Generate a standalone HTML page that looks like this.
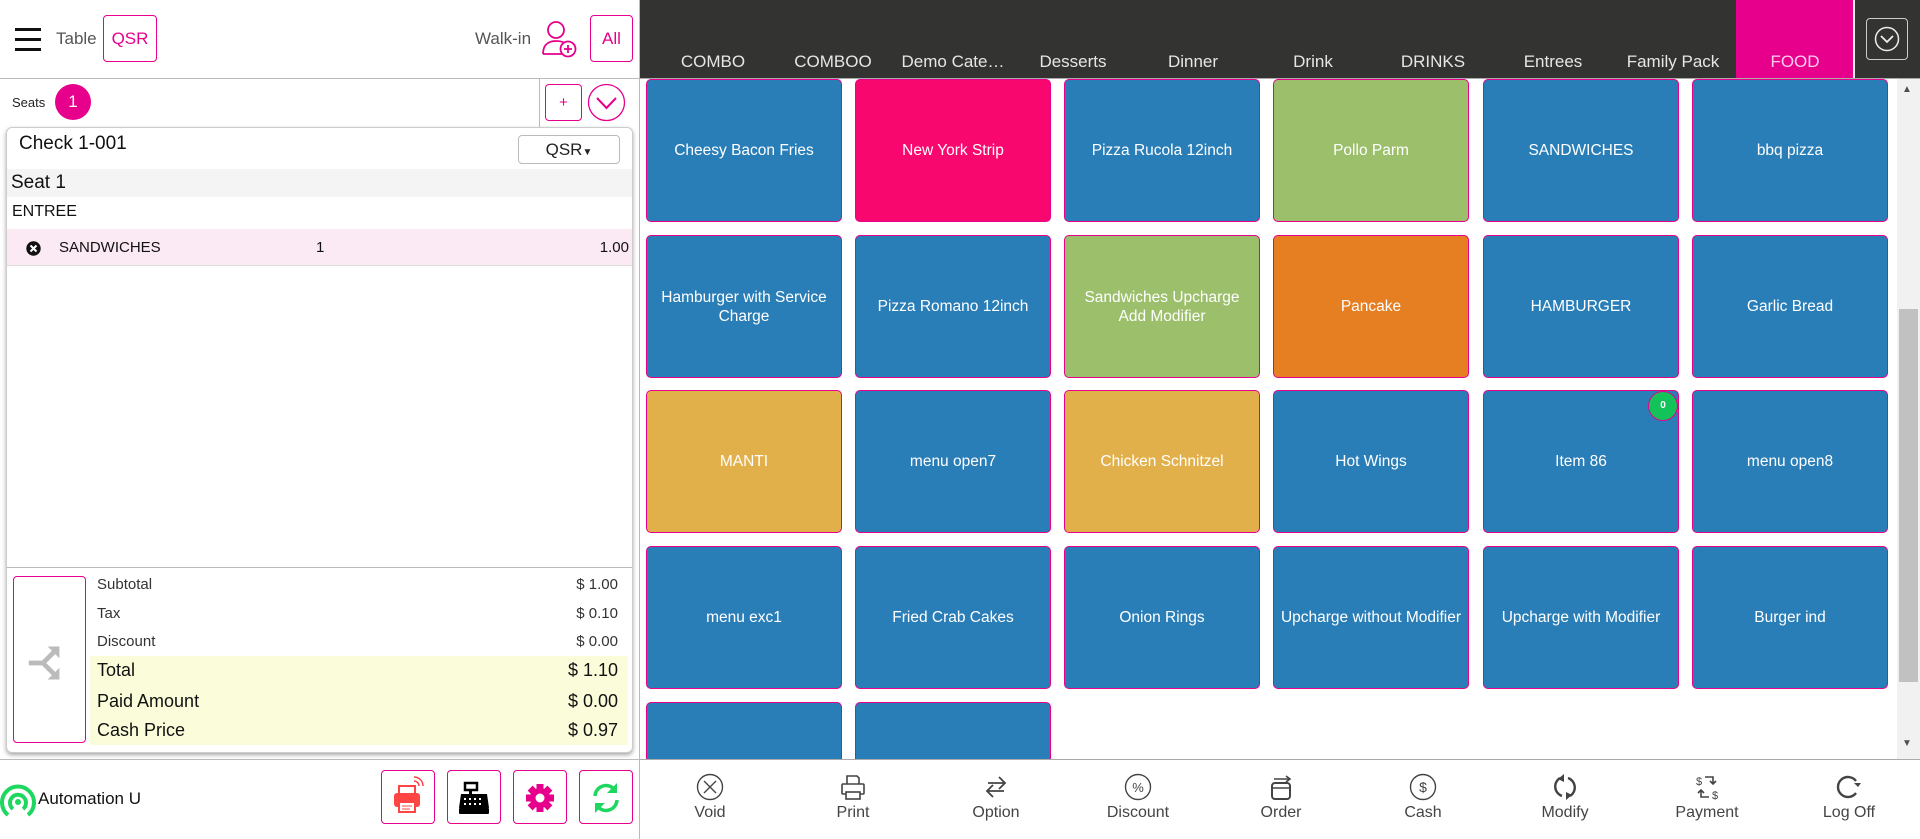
<!DOCTYPE html>
<html><head><meta charset="utf-8"><style>
*{box-sizing:border-box;margin:0;padding:0}
body{width:1920px;height:839px;overflow:hidden;background:#fff;font-family:"Liberation Sans",Arial,sans-serif;position:relative;color:#222}
.a{position:absolute}
.pbox{position:absolute;border:1px solid #e6008c;border-radius:4px;background:#fff}
.cat{position:absolute;top:52px;width:120px;text-align:center;color:#e6e6e6;font-size:17px;white-space:nowrap}
.t{position:absolute;width:196px;height:143px;border:1px solid #e6008c;border-radius:5px;color:#fff;font-size:15.5px;display:flex;align-items:center;justify-content:center;text-align:center;line-height:19px}
.b{background:#2a7eb7}.pk{background:#f8076e}.g{background:#9cbf6b}.o{background:#e67e22}.y{background:#e2b04b}
.bt{position:absolute;top:773px;width:142px;text-align:center;color:#444;font-size:16px}
.bt svg{display:block;margin:0 auto 3px}
.r{position:absolute;left:97px;width:521px;font-size:15px;color:#333}
.r span{float:right}
.R{font-size:18px;color:#111}
</style></head><body>
<!-- left header -->
<div class="a" style="left:15px;top:28px;width:26px;height:3px;background:#111"></div>
<div class="a" style="left:15px;top:38px;width:26px;height:3px;background:#111"></div>
<div class="a" style="left:15px;top:48px;width:26px;height:3px;background:#111"></div>
<div class="a" style="left:56px;top:29px;font-size:17px;color:#555">Table</div>
<div class="pbox" style="left:103px;top:15px;width:54px;height:47px;color:#e6008c;font-size:17px;text-align:center;line-height:45px">QSR</div>
<div class="a" style="left:475px;top:29px;font-size:17px;color:#555">Walk-in</div>
<svg class="a" style="left:542px;top:20px" width="38" height="40" viewBox="0 0 38 40"><circle cx="14" cy="10" r="8" fill="none" stroke="#e6008c" stroke-width="1.8"/><path d="M1 34 C1 22 10 21 14 21 C19 21 22 22 24 24 M1 34 L20 34" fill="none" stroke="#e6008c" stroke-width="1.8"/><circle cx="26" cy="29" r="7.5" fill="#fff" stroke="#e6008c" stroke-width="1.8"/><path d="M26 25v8M22 29h8" stroke="#e6008c" stroke-width="1.8"/></svg>
<div class="pbox" style="left:590px;top:15px;width:43px;height:47px;color:#e6008c;font-size:17px;text-align:center;line-height:45px">All</div>
<div class="a" style="left:0;top:78px;width:640px;height:1px;background:#bbb"></div>
<div class="a" style="left:639px;top:0;width:1px;height:839px;background:#bbb"></div>
<!-- seats -->
<div class="a" style="left:12px;top:95px;font-size:13px">Seats</div>
<div class="a" style="left:55px;top:84px;width:36px;height:36px;border-radius:50%;background:#e6008c;color:#fff;font-size:17px;text-align:center;line-height:36px">1</div>
<div class="a" style="left:539px;top:79px;width:1px;height:48px;background:#bbb"></div>
<div class="pbox" style="left:545px;top:84px;width:37px;height:37px;color:#e6008c;text-align:center;line-height:35px;font-size:15px">+</div>
<svg class="a" style="left:587px;top:83px" width="39" height="39"><circle cx="19.5" cy="19.5" r="18" fill="none" stroke="#e6008c" stroke-width="1.3"/><path d="M10 15l9.5 10 9.5-10" fill="none" stroke="#e6008c" stroke-width="2"/></svg>
<!-- check card -->
<div class="a" style="left:6px;top:127px;width:627px;height:626px;border:1px solid #ccc;border-radius:6px;box-shadow:0 2px 4px rgba(0,0,0,.35);background:#fff"></div>
<div class="a" style="left:19px;top:133px;font-size:19px;color:#111">Check 1-001</div>
<div class="a" style="left:518px;top:135px;width:102px;height:29px;border:1px solid #bbb;border-radius:4px;font-size:17px;text-align:center;line-height:27px">QSR<span style="font-size:10px">▼</span></div>
<div class="a" style="left:7px;top:169px;width:625px;height:28px;background:#f4f4f4;font-size:19px;padding-left:4px;line-height:28px;color:#111">Seat 1</div>
<div class="a" style="left:12px;top:203px;font-size:16px;color:#111">ENTREE</div>
<div class="a" style="left:7px;top:229px;width:625px;height:37px;background:#fbe9f3;border-bottom:1px solid #ddd"></div>
<svg class="a" style="left:26px;top:241px" width="15" height="15"><circle cx="7.5" cy="7.5" r="7.2" fill="#111"/><path d="M4.5 4.5l6 6M10.5 4.5l-6 6" stroke="#fff" stroke-width="2"/></svg>
<div class="a" style="left:59px;top:239px;font-size:15px;color:#111">SANDWICHES</div>
<div class="a" style="left:316px;top:239px;font-size:15px;color:#111">1</div>
<div class="a" style="left:569px;top:239px;width:60px;text-align:right;font-size:15px;color:#111">1.00</div>
<div class="a" style="left:7px;top:567px;width:625px;height:1px;background:#bbb"></div>
<div class="pbox" style="left:13px;top:576px;width:73px;height:167px"></div>
<svg class="a" style="left:28px;top:643px" width="44" height="40" viewBox="0 0 36 34"><path d="M0 17h12l10-10M12 17l10 10" fill="none" stroke="#bbb" stroke-width="4"/><path d="M16 3h10v10z M16 31h10v-10z" fill="#bbb"/></svg>
<div class="a" style="left:90px;top:656px;width:538px;height:89px;background:#fbfdda"></div>
<div class="r" style="top:576px">Subtotal<span>$ 1.00</span></div>
<div class="r" style="top:605px">Tax<span>$ 0.10</span></div>
<div class="r" style="top:633px">Discount<span>$ 0.00</span></div>
<div class="r R" style="top:660px">Total<span>$ 1.10</span></div>
<div class="r R" style="top:691px">Paid Amount<span>$ 0.00</span></div>
<div class="r R" style="top:720px">Cash Price<span>$ 0.97</span></div>
<!-- bottom left -->
<div class="a" style="left:0;top:759px;width:640px;height:1px;background:#bbb"></div>
<svg class="a" style="left:0;top:782px" width="38" height="38" viewBox="0 0 38 38"><path d="M8 33A16 16 0 1 1 28 33" fill="none" stroke="#1ed760" stroke-width="4"/><path d="M13 27A8 8 0 1 1 23 27" fill="none" stroke="#1ed760" stroke-width="4"/><circle cx="18" cy="20" r="3" fill="#1ed760"/></svg>
<div class="a" style="left:38px;top:789px;font-size:17px;color:#111">Automation U</div>
<div class="pbox" style="left:381px;top:770px;width:54px;height:54px"><svg width="52" height="52"><rect x="12" y="22" width="26" height="14" rx="3" fill="#f44"/><rect x="17" y="15" width="16" height="8" fill="#fff" stroke="#f44" stroke-width="2"/><rect x="17" y="31" width="16" height="10" fill="#fff" stroke="#f44" stroke-width="2"/><path d="M20 35h10M20 38h8" stroke="#f44"/><path d="M32 10a5 5 0 0 1 5 5M32 6a9 9 0 0 1 9 9" fill="none" stroke="#f44" stroke-width="1.5"/></svg></div>
<div class="pbox" style="left:447px;top:770px;width:54px;height:54px"><svg width="52" height="52"><rect x="17" y="12" width="12" height="7" fill="none" stroke="#000" stroke-width="2.5"/><rect x="21" y="18" width="3" height="5" fill="#000"/><path d="M13 23h26l2 14H11z" fill="#000"/><rect x="11" y="37" width="30" height="6" rx="1" fill="#000"/><g fill="#fff"><rect x="16" y="27" width="2" height="2"/><rect x="21" y="27" width="2" height="2"/><rect x="26" y="27" width="2" height="2"/><rect x="31" y="27" width="2" height="2"/><rect x="16" y="32" width="2" height="2"/><rect x="21" y="32" width="2" height="2"/><rect x="26" y="32" width="2" height="2"/><rect x="31" y="32" width="2" height="2"/></g></svg></div>
<div class="pbox" style="left:513px;top:770px;width:54px;height:54px"><svg width="52" height="52" viewBox="0 0 52 52"><g transform="translate(26 27)" fill="#e6008c"><circle r="10"/><g id="tt"><rect x="-3.5" y="-14" width="7" height="6"/></g><use href="#tt" transform="rotate(45)"/><use href="#tt" transform="rotate(90)"/><use href="#tt" transform="rotate(135)"/><use href="#tt" transform="rotate(180)"/><use href="#tt" transform="rotate(225)"/><use href="#tt" transform="rotate(270)"/><use href="#tt" transform="rotate(315)"/><circle r="4.5" fill="#fff"/></g></svg></div>
<div class="pbox" style="left:579px;top:770px;width:54px;height:54px"><svg width="52" height="52"><path d="M15 25a11 11 0 0 1 19-7" fill="none" stroke="#1ed760" stroke-width="3.5"/><path d="M37 12v10h-10z" fill="#1ed760"/><path d="M37 29a11 11 0 0 1-19 7" fill="none" stroke="#1ed760" stroke-width="3.5"/><path d="M15 42v-10h10z" fill="#1ed760"/></svg></div>
<!-- right: category bar -->
<div class="a" style="left:640px;top:0;width:1280px;height:78px;background:#333331"></div>
<div class="a" style="left:1736px;top:0;width:117px;height:78px;background:#e6008c"></div>
<div class="a" style="left:1853px;top:0;width:2px;height:78px;background:#eee"></div>
<div class="cat" style="left:653px">COMBO</div>
<div class="cat" style="left:773px">COMBOO</div>
<div class="cat" style="left:893px">Demo Cate…</div>
<div class="cat" style="left:1013px">Desserts</div>
<div class="cat" style="left:1133px">Dinner</div>
<div class="cat" style="left:1253px">Drink</div>
<div class="cat" style="left:1373px">DRINKS</div>
<div class="cat" style="left:1493px">Entrees</div>
<div class="cat" style="left:1613px">Family Pack</div>
<div class="cat" style="left:1735px;color:#fce">FOOD</div>
<div class="a" style="left:1866px;top:18px;width:42px;height:42px;border:1px solid #ccc;border-radius:4px"><svg width="40" height="40"><circle cx="20" cy="20" r="11.5" fill="none" stroke="#eee" stroke-width="1.5"/><path d="M14 17l6 6 6-6" fill="none" stroke="#eee" stroke-width="1.8"/></svg></div>
<div class="a" style="left:640px;top:78px;width:1280px;height:1px;background:#aaa"></div>
<!-- tiles -->
<div class="t b" style="left:646px;top:79px">Cheesy Bacon Fries</div>
<div class="t pk" style="left:855px;top:79px">New York Strip</div>
<div class="t b" style="left:1064px;top:79px">Pizza Rucola 12inch</div>
<div class="t g" style="left:1273px;top:79px">Pollo Parm</div>
<div class="t b" style="left:1483px;top:79px">SANDWICHES</div>
<div class="t b" style="left:1692px;top:79px">bbq pizza</div>
<div class="t b" style="left:646px;top:235px">Hamburger with Service<br>Charge</div>
<div class="t b" style="left:855px;top:235px">Pizza Romano 12inch</div>
<div class="t g" style="left:1064px;top:235px">Sandwiches Upcharge<br>Add Modifier</div>
<div class="t o" style="left:1273px;top:235px">Pancake</div>
<div class="t b" style="left:1483px;top:235px">HAMBURGER</div>
<div class="t b" style="left:1692px;top:235px">Garlic Bread</div>
<div class="t y" style="left:646px;top:390px">MANTI</div>
<div class="t b" style="left:855px;top:390px">menu open7</div>
<div class="t y" style="left:1064px;top:390px">Chicken Schnitzel</div>
<div class="t b" style="left:1273px;top:390px">Hot Wings</div>
<div class="t b" style="left:1483px;top:390px">Item 86</div>
<div class="a" style="left:1648px;top:391px;width:30px;height:30px;border-radius:50%;background:#13c35a;border:1px solid #e6008c;color:#fff;font-size:10px;font-weight:bold;text-align:center;line-height:28px">0</div>
<div class="t b" style="left:1692px;top:390px">menu open8</div>
<div class="t b" style="left:646px;top:546px">menu exc1</div>
<div class="t b" style="left:855px;top:546px">Fried Crab Cakes</div>
<div class="t b" style="left:1064px;top:546px">Onion Rings</div>
<div class="t b" style="left:1273px;top:546px">Upcharge without Modifier</div>
<div class="t b" style="left:1483px;top:546px">Upcharge with Modifier</div>
<div class="t b" style="left:1692px;top:546px">Burger ind</div>
<div class="t b" style="left:646px;top:702px;height:57px;border-bottom:none;border-radius:5px 5px 0 0"></div>
<div class="t b" style="left:855px;top:702px;height:57px;border-bottom:none;border-radius:5px 5px 0 0"></div>
<!-- scrollbar -->
<div class="a" style="left:1897px;top:79px;width:23px;height:680px;background:#f1f1f1"></div>
<div class="a" style="left:1899px;top:309px;width:19px;height:373px;background:#c1c1c1"></div>
<div class="a" style="left:1902px;top:84px;font-size:10px;color:#505050">▲</div>
<div class="a" style="left:1902px;top:738px;font-size:10px;color:#505050">▼</div>
<div class="a" style="left:640px;top:759px;width:1280px;height:1px;background:#aaa"></div>
<!-- bottom toolbar -->
<div class="bt" style="left:639px"><svg width="28" height="28"><circle cx="14" cy="14" r="12.5" fill="none" stroke="#444" stroke-width="1.4"/><path d="M8 8l12 12M20 8L8 20" stroke="#444" stroke-width="1.4"/></svg>Void</div>
<div class="bt" style="left:782px"><svg width="28" height="28"><path d="M8 11V3h10l2 2v6" fill="none" stroke="#444" stroke-width="1.6"/><rect x="3" y="11" width="22" height="10" rx="1" fill="none" stroke="#444" stroke-width="1.6"/><rect x="7" y="19" width="14" height="7" fill="#fff" stroke="#444" stroke-width="1.6"/></svg>Print</div>
<div class="bt" style="left:925px"><svg width="28" height="28"><path d="M6 10h16M17 4l6 6-6 6M22 18H6M11 12l-6 6 6 6" fill="none" stroke="#444" stroke-width="1.8"/></svg>Option</div>
<div class="bt" style="left:1067px"><svg width="28" height="28"><circle cx="14" cy="14" r="12.5" fill="none" stroke="#444" stroke-width="1.4"/><text x="14" y="19" font-size="13" text-anchor="middle" fill="#444" font-family="Liberation Sans">%</text></svg>Discount</div>
<div class="bt" style="left:1210px"><svg width="28" height="28"><rect x="5" y="10" width="18" height="16" rx="3" fill="none" stroke="#444" stroke-width="2"/><path d="M5 15h18M7 6h16M19 3l4 3-4 3" fill="none" stroke="#444" stroke-width="1.6"/></svg>Order</div>
<div class="bt" style="left:1352px"><svg width="28" height="28"><circle cx="14" cy="14" r="12.5" fill="none" stroke="#444" stroke-width="1.4"/><text x="14" y="19" font-size="14" text-anchor="middle" fill="#444" font-family="Liberation Sans">$</text></svg>Cash</div>
<div class="bt" style="left:1494px"><svg width="28" height="28"><path d="M9 5A10 10 0 0 0 11 23M19 23A10 10 0 0 0 17 5" fill="none" stroke="#444" stroke-width="2.4"/><path d="M13 1v8l-6-3zM15 27v-8l6 3z" fill="#444"/></svg>Modify</div>
<div class="bt" style="left:1636px"><svg width="28" height="28"><text x="6" y="12" font-size="11" text-anchor="middle" fill="#444" font-family="Liberation Sans">$</text><text x="22" y="26" font-size="11" text-anchor="middle" fill="#444" font-family="Liberation Sans">$</text><path d="M12 4h8v7M17 8l3 3 3-3M16 24H8v-7M5 20l3-3 3 3" fill="none" stroke="#444" stroke-width="1.6"/></svg>Payment</div>
<div class="bt" style="left:1778px"><svg width="28" height="28"><path d="M21 8A10 10 0 1 0 21 20" fill="none" stroke="#444" stroke-width="2.4"/><path d="M19 10h7l-3 4z" fill="#444"/></svg>Log Off</div>
</body></html>
